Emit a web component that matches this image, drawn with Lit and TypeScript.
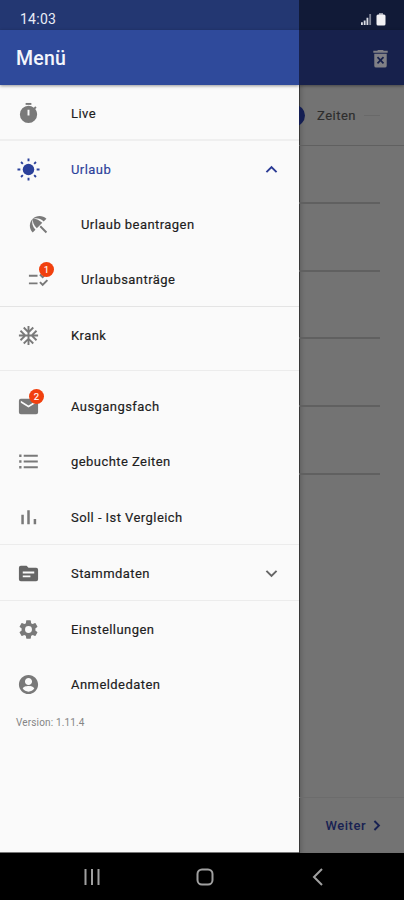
import { LitElement, html, css, svg, nothing } from "lit";
import { customElement } from "lit/decorators.js";
import { classMap } from "lit/directives/class-map.js";

const icons = {
  timer: svg`<path d="M9 1h6v2H9z"/><path fill-rule="evenodd" d="M19.03 7.39l1.42-1.42c-.43-.51-.9-.99-1.41-1.41l-1.42 1.42A8.96 8.96 0 0 0 12 4a9 9 0 1 0 9 9c0-2.12-.74-4.07-1.97-5.61zM13 14h-2V8h2v6z"/>`,
  sun: svg`<circle cx="12" cy="12" r="6"/><path d="M11 .5h2v3h-2zM11 20.500h2v3h-2zM.5 11h3v2h-3zM20.500 11h3v2h-3zM3.500 4.900l1.400-1.400 1.900 1.900-1.400 1.400zM17.200 18.600l1.400-1.400 1.900 1.900-1.400 1.400zM17.200 5.400l1.900-1.900 1.400 1.400-1.900 1.900zM3.500 19.100l1.900-1.900 1.400 1.400-1.900 1.900z"/>`,
  beach: svg`<path d="M13.127 14.560l1.430-1.430 6.440 6.443L19.570 21zm4.293-5.730l2.860-2.860c-3.950-3.950-10.350-3.960-14.300-.02 3.930-1.300 8.310-.25 11.440 2.880zM5.950 5.980c-3.940 3.950-3.930 10.350.02 14.300l2.860-2.860C5.700 14.290 4.650 9.910 5.950 5.980zm.02-.02l-.01.01c-.38 3.010 1.170 6.880 4.300 10.020l5.730-5.730c-3.130-3.130-7.010-4.680-10.020-4.300z"/>`,
  checklist: svg`<path d="M11 7H2v2h9V7zm0 8H2v2h9v-2zM16.340 11l-3.540-3.540 1.410-1.410 2.120 2.120 4.240-4.240L22 5.340 16.340 11zm0 8l-3.540-3.540 1.410-1.410 2.120 2.120 4.240-4.240L22 13.340 16.340 19z"/>`,
  snow: svg`<path d="M22 11h-4.170l3.240-3.240-1.410-1.420L15 11h-2V9l4.660-4.660-1.420-1.410L13 6.170V2h-2v4.170L7.760 2.930 6.340 4.340 11 9v2H9L4.340 6.340 2.930 7.760 6.170 11H2v2h4.170l-3.240 3.240 1.410 1.420L9 13h2v2l-4.660 4.660 1.420 1.410L11 17.830V22h2v-4.170l3.240 3.240 1.420-1.410L13 15v-2h2l4.660 4.660 1.410-1.420L17.830 13H22z"/>`,
  mail: svg`<path d="M20 4H4a2 2 0 0 0-2 2v12a2 2 0 0 0 2 2h16a2 2 0 0 0 2-2V6a2 2 0 0 0-2-2zm0 4l-8 5-8-5V6l8 5 8-5v2z"/>`,
  list: svg`<path d="M2.300 4.800h2.400v2.400h-2.400zM2.300 10.800h2.400v2.400h-2.400zM2.300 16.800h2.400v2.400h-2.400zM7 5h14.700v2H7zM7 11h14.700v2H7zM7 17h14.700v2H7z"/>`,
  bars: svg`<path d="M4.500 9h2.600v10H4.500zM10.700 4.500h2.600v14.500h-2.600zM17.400 13.500h2.600v5.500h-2.600z"/>`,
  folder: svg`<path fill-rule="evenodd" d="M20 6h-8l-2-2H4a2 2 0 0 0-2 2v12a2 2 0 0 0 2 2h16a2 2 0 0 0 2-2V8a2 2 0 0 0-2-2zm-6 10H6v-2h8v2zm4-4H6v-2h12v2z"/>`,
  gear: svg`<path d="M19.140 12.940c.04-.3.060-.61.060-.94 0-.32-.02-.64-.07-.94l2.030-1.580a.49.49 0 0 0 .12-.61l-1.920-3.320a.488.488 0 0 0-.59-.22l-2.390.96c-.5-.38-1.030-.7-1.620-.94l-.36-2.540a.484.484 0 0 0-.48-.41h-3.840c-.24 0-.43.17-.47.41l-.36 2.540c-.59.24-1.130.57-1.620.94l-2.390-.96c-.22-.08-.47 0-.59.22L2.740 8.870c-.12.21-.08.47.12.61l2.030 1.580c-.05.3-.09.63-.09.94s.02.64.07.94l-2.030 1.580a.49.49 0 0 0-.12.61l1.920 3.320c.12.22.37.29.59.22l2.390-.96c.5.38 1.030.7 1.620.94l.36 2.540c.05.24.24.41.48.41h3.840c.24 0 .44-.17.47-.41l.36-2.540c.59-.24 1.130-.56 1.620-.94l2.390.96c.22.08.47 0 .59-.22l1.920-3.320c.12-.22.070-.47-.12-.61l-2.010-1.580zM12 15.600A3.600 3.600 0 1 1 12 8.400a3.600 3.600 0 0 1 0 7.200z"/>`,
  account: svg`<path d="M12 2C6.480 2 2 6.480 2 12s4.480 10 10 10 10-4.480 10-10S17.520 2 12 2zm0 3.100c2 0 3.700 1.600 3.700 3.700s-1.700 3.700-3.700 3.700-3.700-1.600-3.700-3.700 1.700-3.700 3.700-3.700zM12 19.500c-2.500 0-4.710-1.280-6-3.220.03-1.990 4-2.780 6-2.780s5.970.79 6 2.780c-1.290 1.940-3.500 3.220-6 3.220z"/>`,
  up: svg`<path d="M12 8l-6 6 1.410 1.410L12 10.830l4.590 4.580L18 14z"/>`,
  down: svg`<path d="M16.590 8.590L12 13.170 7.410 8.590 6 10l6 6 6-6z"/>`,
  right: svg`<path d="M8.600 4.700L6.700 6.600l5.400 5.400-5.400 5.400 1.900 1.900 7.300-7.300z"/>`,
  trash: svg`<path fill-rule="evenodd" d="M5.500 19.500a2 2 0 0 0 2 2h9a2 2 0 0 0 2-2V7h-13v12.500zM8.200 11.200l1.300-1.300 2.500 2.500 2.500-2.500 1.300 1.300-2.500 2.600 2.500 2.600-1.300 1.300-2.500-2.600-2.500 2.600-1.300-1.300 2.500-2.600zM15.500 4l-1-1h-5l-1 1H4.500v2h15V4z"/>`,
};

type IconName = keyof typeof icons;
interface Item {
  icon: IconName;
  label: string;
  badge?: number;
  sub?: boolean;
  active?: boolean;
  chevron?: "up" | "down";
}

const groups: { kind: string; items: Item[] }[] = [
  { kind: "live", items: [{ icon: "timer", label: "Live" }] },
  {
    kind: "vacation",
    items: [
      { icon: "sun", label: "Urlaub", active: true, chevron: "up" },
      { icon: "beach", label: "Urlaub beantragen", sub: true },
      { icon: "checklist", label: "Urlaubsanträge", sub: true, badge: 1 },
    ],
  },
  { kind: "sick", items: [{ icon: "snow", label: "Krank" }] },
  {
    kind: "times",
    items: [
      { icon: "mail", label: "Ausgangsfach", badge: 2 },
      { icon: "list", label: "gebuchte Zeiten" },
      { icon: "bars", label: "Soll - Ist Vergleich" },
    ],
  },
  { kind: "master", items: [{ icon: "folder", label: "Stammdaten", chevron: "down" }] },
  {
    kind: "settings",
    items: [
      { icon: "gear", label: "Einstellungen" },
      { icon: "account", label: "Anmeldedaten" },
    ],
  },
];

const icon = (name: IconName) => html`<svg class="icon ${name}" viewBox="0 0 24 24" aria-hidden="true">${icons[name]}</svg>`;

@customElement("app-root")
export class AppRoot extends LitElement {
  static styles = css`
    :host {
      display: grid;
      grid-template: 853px 47px / 299px 105px;
      width: 404px;
      height: 900px;
      overflow: hidden;
      background: #000;
      font-family: Roboto, "Liberation Sans", sans-serif;
      color: #202020;
    }
    * { box-sizing: border-box; }
    .icon { display: block; width: 23px; height: 23px; fill: currentColor; flex: none; }
    .drawer { background: #fafafa; border-bottom: 1px solid #777; display: flex; flex-direction: column; }
    .status { height: 30px; flex: none; background: #233772; color: #e9ecf6; padding: 8px 0 0 20px; font-size: 14px; line-height: 22px; font-weight: 400; letter-spacing: 0.25px; }
    .bar { height: 55px; flex: none; background: #2f4a9b; color: #f4f6fc; padding: 2px 0 0 16px; display: flex; align-items: center; font-size: 19.500px; font-weight: 500; letter-spacing: 0.2px; box-shadow: 0 1px 3px #0006; }
    .group { border-bottom: 1px solid #ececec; flex: none; }
    .live { height: 56px; padding-top: 1px; border-bottom: 2px solid #efefef; }
    .vacation { height: 166px; padding-top: 1px; border-color: #e4e4e4; }
    .sick { height: 64px; padding-top: 1px; }
    .times { height: 174px; padding-top: 8px; }
    .master { height: 56px; padding-top: 1px; }
    .settings { border: 0; padding-top: 1px; }
    .row { height: 55.300px; display: flex; align-items: center; padding: 0 16px; font-size: 13px; font-weight: 400; -webkit-text-stroke: 0.15px currentColor; letter-spacing: 0.44px; white-space: nowrap; }
    .vacation .row { height: 55px; }
    .slot { position: relative; width: 55px; padding-left: 0.5px; color: #797979; }
    .master .slot { color: #666; }
    .sub { padding-left: 26px; }
    .active, .active .slot { color: #2b419b; }
    .label { flex: 1; }
    .chev { color: #666; }
    .active .chev { color: #2b3b95; }
    .badge { position: absolute; left: 13px; top: -6px; width: 15px; height: 15px; border-radius: 50%; background: #f1400e; color: #fff; font-size: 9.500px; line-height: 15px; text-align: center; letter-spacing: 0; }
    .version { font-size: 10px; line-height: 14px; letter-spacing: 0.15px; color: #858585; padding: 3px 16px; }

    .page { background: #737373; display: flex; flex-direction: column; overflow: hidden; box-shadow: inset 1px 0 #383838, inset 5px 0 5px -3px #0003; color: #2d2d2d; }
    .page-status { height: 30px; flex: none; background: #111a37; display: flex; justify-content: flex-end; align-items: center; padding: 8px 18px 0 0; gap: 4px; color: #d9dce5; }
    .signal { width: 11px; height: 11px; fill: currentColor; }
    .battery { width: 10px; height: 13px; fill: #f1f1f5; }
    .page-bar { height: 55px; flex: none; background: #17214c; display: flex; justify-content: flex-end; align-items: center; padding-right: 12px; padding-top: 1px; color: #808086; box-shadow: 0 1px 3px #0006; }
    .step { height: 61px; flex: none; display: flex; align-items: center; border-bottom: 1px solid #606060; font-size: 13px; font-weight: 400; -webkit-text-stroke: 0.15px currentColor; letter-spacing: 0.5px; }
    .dot { width: 6px; height: 21px; overflow: hidden; display: flex; justify-content: flex-end; }
    .dot-fill { width: 21px; height: 21px; border-radius: 50%; background: #141e52; flex: none; }
    .step-label { width: 39px; margin: 0 8px 0 12px; }
    .step-line { width: 16px; height: 1px; background: #696969; }
    .field { height: 67.700px; flex: none; border-bottom: 2px solid #606060; margin-right: 24px; }
    .field.first { height: 58px; }
    .next { margin-top: auto; height: 56px; border-top: 1px solid #6c6c6c; display: flex; align-items: center; justify-content: flex-end; padding-right: 18px; color: #182152; font-size: 13px; font-weight: 500; letter-spacing: 0.5px; gap: 3px; }
    .next .icon { width: 17px; height: 17px; }

    .nav { grid-column: 1 / -1; display: flex; align-items: center; justify-content: center; padding-left: 5px; gap: 95px; color: #a0a0a0; }
    .nav-icon { width: 18px; height: 18px; fill: none; stroke: currentColor; stroke-width: 2; }
  `;

  private row(item: Item) {
    return html`<div class=${classMap({ row: true, sub: !!item.sub, active: !!item.active })}>
      <span class="slot">${icon(item.icon)}${item.badge ? html`<span class="badge">${item.badge}</span>` : nothing}</span>
      <span class="label">${item.label}</span>
      ${item.chevron ? html`<span class="chev">${icon(item.chevron)}</span>` : nothing}
    </div>`;
  }

  render() {
    return html`
      <aside class="drawer">
        <div class="status">14:03</div>
        <header class="bar">Menü</header>
        ${groups.map((g) => html`<section class="group ${g.kind}">${g.items.map((i) => this.row(i))}</section>`)}
        <div class="version">Version: 1.11.4</div>
      </aside>
      <main class="page">
        <div class="page-status">
          <svg class="signal" viewBox="0 0 12 12"><path d="M0 9h2v3H0zM3 7h2v5H3zM6 4h2v8H6z" /><path opacity=".55" d="M9 0h2v12H9z" /></svg>
          <svg class="battery" viewBox="0 0 10 13"><path opacity=".6" d="M3 0h4v2H3z" /><rect x=".5" y="1.500" width="9" height="11" rx="1.500" /></svg>
        </div>
        <div class="page-bar">${icon("trash")}</div>
        <div class="step">
          <span class="dot"><span class="dot-fill"></span></span>
          <span class="step-label">Zeiten</span>
          <span class="step-line"></span>
        </div>
        <div class="field first"></div>
        ${[1, 2, 3, 4].map(() => html`<div class="field"></div>`)}
        <div class="next"><span>Weiter</span>${icon("right")}</div>
      </main>
      <nav class="nav">
        <svg class="nav-icon" viewBox="0 0 18 18"><path d="M2.500 1v16M9 1v16M15.500 1v16" /></svg>
        <svg class="nav-icon" viewBox="0 0 18 18"><rect x="1.500" y="1.500" width="15" height="15" rx="4.500" /></svg>
        <svg class="nav-icon" viewBox="0 0 18 18"><path d="M13 1L5 9l8 8" /></svg>
      </nav>
    `;
  }
}
